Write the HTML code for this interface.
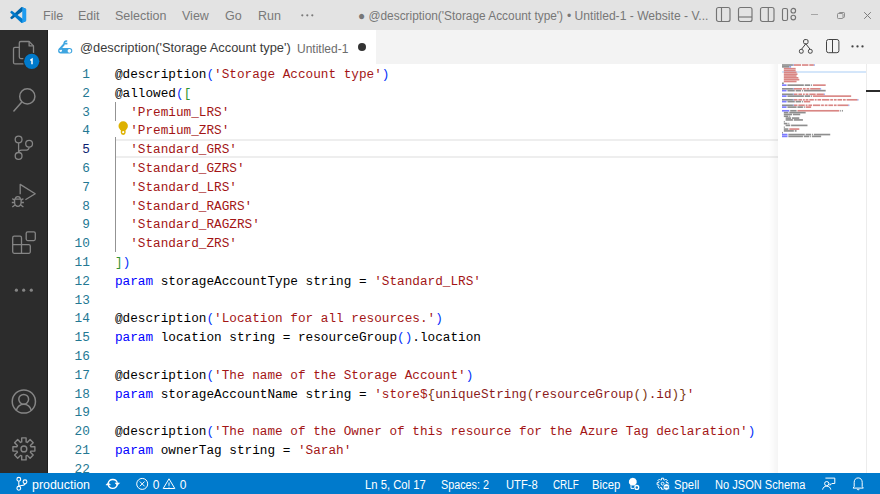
<!DOCTYPE html>
<html><head><meta charset="utf-8">
<style>
*{margin:0;padding:0;box-sizing:border-box}
html,body{width:880px;height:494px;overflow:hidden;background:#fff;font-family:"Liberation Sans",sans-serif}
.abs{position:absolute}
svg{position:absolute;overflow:visible}
#title{left:0;top:0;width:880px;height:30px;background:#e3e3e3}
.menu{position:absolute;top:1px;height:30px;line-height:30px;font-size:12.5px;color:#797979;white-space:nowrap}
#act{left:0;top:30px;width:48px;height:443px;background:#2c2c2c;border-right:1px solid #1f1f1f}
#tabs{left:48px;top:30px;width:832px;height:34px;background:#f3f3f3}
#tab{left:48px;top:30px;width:328px;height:34px;background:#fff}
.tabt{position:absolute;top:30px;height:34px;line-height:34px;white-space:nowrap}
#editor{left:48px;top:64px;width:832px;height:409px;background:#fff;overflow:hidden}
.ln{position:absolute;left:0;width:41.8px;text-align:right;font-family:"Liberation Mono",monospace;font-size:12.74px;color:#237893;height:18.8px;line-height:18.8px}
.ln.cur{color:#0b216f}
.code{position:absolute;left:67px;font-family:"Liberation Mono",monospace;font-size:12.71px;color:#000;height:18.8px;line-height:18.8px;white-space:pre}
.s{color:#a31515}.b{color:#0431fa}.g{color:#319331}.k{color:#0000ff}.s2{color:#7b3814}.s3{color:#8b1a1a}
#status{left:0;top:473px;width:880px;height:21px;background:#007acc}
.st{position:absolute;top:474.7px;height:21px;line-height:21px;font-size:12px;color:#fff;white-space:nowrap;transform-origin:0 0}
</style></head><body>
<div id="title" class="abs">
  <svg style="left:9.5px;top:7px" width="16.5" height="16" viewBox="0 0 100 100">
    <path fill="#0065A9" d="M96.46 10.8L75.86.87C73.47-.28 70.62.2 68.75 2.08L1.3 63.58c-1.81 1.65-1.81 4.5 0 6.15l5.51 5.01c1.49 1.35 3.72 1.45 5.32.24L93.36 13.37C96.09 11.3 100 13.24 100 16.66v-.24c0-2.4-1.37-4.58-3.54-5.62z"/>
    <path fill="#007ACC" d="M96.46 89.2l-20.6 9.93c-2.39 1.15-5.24.67-7.11-1.21L1.3 36.42c-1.81-1.65-1.81-4.5 0-6.15l5.51-5.01c1.49-1.35 3.72-1.45 5.32-.24l81.23 61.61c2.73 2.07 6.64.13 6.64-3.29v.24c0 2.4-1.37 4.58-3.54 5.62z"/>
    <path fill="#1F9CF0" d="M75.86 99.13c-2.39 1.15-5.24.67-7.11-1.21 2.31 2.31 6.25.68 6.25-2.58V4.66c0-3.26-3.94-4.89-6.25-2.58 1.87-1.88 4.72-2.36 7.11-1.21l20.6 9.92c2.17 1.04 3.54 3.23 3.54 5.63v67.16c0 2.4-1.37 4.59-3.54 5.63z"/>
  </svg>
  <div class="menu" style="left:43px">File</div>
  <div class="menu" style="left:78px">Edit</div>
  <div class="menu" style="left:115px">Selection</div>
  <div class="menu" style="left:182px">View</div>
  <div class="menu" style="left:225px">Go</div>
  <div class="menu" style="left:258px">Run</div>
  <svg style="left:301px;top:14px" width="13" height="3" viewBox="0 0 13 3"><circle cx="1.3" cy="1.3" r="1.1" fill="#7a7a7a"/><circle cx="6.3" cy="1.3" r="1.1" fill="#7a7a7a"/><circle cx="11.3" cy="1.3" r="1.1" fill="#7a7a7a"/></svg>
  <div class="menu" style="left:358px;color:#777;transform:scaleX(0.949);transform-origin:0 0">● @description('Storage Account type')</div>
  <div class="menu" style="left:566.5px;color:#777;transform:scaleX(0.968);transform-origin:0 0">• Untitled-1 - Website - V...</div>
  <!-- layout icons -->
  <svg style="left:716px;top:7px" width="15" height="15" viewBox="0 0 15 15" fill="none" stroke="#747474" stroke-width="1.15"><rect x="0.5" y="0.5" width="13.5" height="14" rx="2"/><line x1="5.5" y1="0.5" x2="5.5" y2="14.5"/></svg>
  <svg style="left:738px;top:7px" width="15" height="15" viewBox="0 0 15 15" fill="none" stroke="#747474" stroke-width="1.15"><rect x="0.5" y="0.5" width="13.5" height="14" rx="2"/><line x1="0.5" y1="10" x2="14" y2="10"/></svg>
  <svg style="left:759.5px;top:7px" width="15" height="15" viewBox="0 0 15 15" fill="none" stroke="#747474" stroke-width="1.15"><rect x="0.5" y="0.5" width="13.5" height="14" rx="2"/><line x1="8.3" y1="0.5" x2="8.3" y2="14.5"/></svg>
  <svg style="left:782px;top:8px" width="15" height="13" viewBox="0 0 15 13" fill="none" stroke="#747474" stroke-width="1.15"><rect x="0.5" y="0.5" width="5" height="12" rx="1.5"/><circle cx="11.3" cy="2.7" r="2.3"/><circle cx="11.3" cy="9.5" r="2.3"/></svg>
  <!-- window controls -->
  <svg style="left:811px;top:14px" width="7" height="2" viewBox="0 0 7 2"><line x1="0" y1="0.5" x2="7" y2="0.5" stroke="#a5a5a5" stroke-width="1"/></svg>
  <svg style="left:837px;top:11.5px" width="8" height="7" viewBox="0 0 8 7" fill="none" stroke="#8e8e8e" stroke-width="1"><rect x="0.5" y="1.5" width="5.5" height="5" rx="0.8"/><path d="M2 1.5V1.2C2 0.8 2.3 0.5 2.7 0.5H6.8C7.2 0.5 7.5 0.8 7.5 1.2V4.8C7.5 5.2 7.2 5.5 6.8 5.5H6"/></svg>
  <svg style="left:863.5px;top:11.5px" width="7" height="7" viewBox="0 0 7 7" fill="none" stroke="#7c7c7c" stroke-width="1"><path d="M0.2 0.2L6.8 6.8M6.8 0.2L0.2 6.8"/></svg>
</div>

<div id="act" class="abs"></div>
<!-- activity icons -->
<svg style="left:0;top:0" width="48" height="494" viewBox="0 0 48 494" fill="none" stroke="#858585" stroke-width="1.3" stroke-linejoin="round">
  <path d="M19.3 47.3H15A1.5 1.5 0 0 0 13.5 48.8V62.4A1.5 1.5 0 0 0 15 63.9H24.5"/>
  <path d="M24 58.6H20.8A1.5 1.5 0 0 1 19.3 57.1V43A1.5 1.5 0 0 1 20.8 41.5H29.1L33.5 45.9V55"/><path d="M29.1 41.5V45.9H33.5"/>
  <circle cx="31.7" cy="61.3" r="8.8" fill="#2c2c2c" stroke="none"/>
  <circle cx="31.7" cy="61.3" r="7.6" fill="#007acc" stroke="none"/>
  <path d="M30.3 60.3L32 59.2V64.3" stroke="#fff" stroke-width="1.5" stroke-linejoin="miter"/>
  <circle cx="27.3" cy="96.4" r="7.6" stroke-width="1.5"/><path d="M21.6 102.3L13.9 111" stroke-width="1.5" stroke-linecap="round"/>
  <circle cx="18.6" cy="139.5" r="3.4"/><circle cx="18.6" cy="155.9" r="3.4"/><circle cx="29.1" cy="143.8" r="3.4"/>
  <path d="M18.6 142.9V152.5"/><path d="M29.1 147.2C29.1 149.3 27.5 150.2 25 150.2H21.5C19.8 150.2 18.6 151 18.6 152.5"/>
  <path d="M20.2 194.2V184.4L35.2 193.8L25.4 199.8"/>
  <path d="M15.4 199A2.45 2.45 0 0 1 20.3 199"/>
  <path d="M14.6 199.1H21.1V202.6A3.25 3.7 0 0 1 14.6 202.6Z"/>
  <path d="M14.6 200.2L12.3 198.6M14.6 202.5H11.8M15 205L12.3 207M21.1 200.2L23.4 198.6M21.1 202.5H23.9M20.7 205L23.4 207"/>
  <path d="M12.7 244.6V237.7A1.5 1.5 0 0 1 14.2 236.2H20A1.5 1.5 0 0 1 21.5 237.7V244.6H28.8A1.5 1.5 0 0 1 30.3 246.1V251.8A1.5 1.5 0 0 1 28.8 253.3H14.2A1.5 1.5 0 0 1 12.7 251.8V244.6H21.5V253.3"/>
  <rect x="26.2" y="231.8" width="9.1" height="8.8" rx="1.5"/>
  <g fill="#858585" stroke="none"><circle cx="16.4" cy="290.2" r="1.6"/><circle cx="23.7" cy="290.2" r="1.6"/><circle cx="31.3" cy="290.2" r="1.6"/></g>
  <circle cx="23.85" cy="401.5" r="11.6" stroke-width="1.5"/><circle cx="23.7" cy="399.3" r="4.9" stroke-width="1.5"/>
  <path d="M16.2 410.5C17.5 406.3 20.3 404.3 23.8 404.3S30.1 406.3 31.4 410.5" stroke-width="1.5"/>
  <g stroke-width="1.4"><path d="M21.70 441.94 L21.70 437.92 L26.10 437.92 L26.10 441.94 L27.27 442.42 L30.11 439.58 L33.22 442.69 L30.38 445.53 L30.86 446.70 L34.88 446.70 L34.88 451.10 L30.86 451.10 L30.38 452.27 L33.22 455.11 L30.11 458.22 L27.27 455.38 L26.10 455.86 L26.10 459.88 L21.70 459.88 L21.70 455.86 L20.53 455.38 L17.69 458.22 L14.58 455.11 L17.42 452.27 L16.94 451.10 L12.92 451.10 L12.92 446.70 L16.94 446.70 L17.42 445.53 L14.58 442.69 L17.69 439.58 L20.53 442.42Z"/><circle cx="23.9" cy="448.9" r="2.9"/></g>
</svg>
<div id="tabs" class="abs"></div>
<div id="tab" class="abs"></div>
<svg style="left:58px;top:40px" width="15" height="14" viewBox="0 0 15 14">
  <path fill="#3ea5e0" fill-rule="evenodd" d="M2.8 8H11.6A2.7 2.7 0 0 1 11.6 13.4H2.8A2.7 2.7 0 0 1 2.8 8Z M2.7 9.4A1.3 1.3 0 1 0 2.71 9.4Z M11.4 9.1A1.8 1.8 0 1 0 11.41 9.1Z"/>
  <path fill="none" stroke="#3ea5e0" stroke-width="2" d="M1.5 9.5L6.2 4.2"/>
  <path fill="none" stroke="#3ea5e0" stroke-width="1.6" d="M9.2 1.2C7 0.6 5.8 2.2 6.2 4.5M6.4 3.6H9.4"/>
</svg>
<div class="tabt" style="left:80px;top:31px;font-size:13px;color:#3b3b3b;transform:scaleX(0.988);transform-origin:0 0">@description('Storage Account type')</div>
<div class="tabt" style="left:297px;top:31.5px;font-size:12px;color:#6c6c6c">Untitled-1</div>
<svg style="left:358px;top:42.5px" width="8" height="8" viewBox="0 0 8 8"><circle cx="4" cy="4" r="4" fill="#333"/></svg>
<!-- tab actions -->
<svg style="left:0;top:0" width="880" height="64" viewBox="0 0 880 64" fill="none" stroke="#424242" stroke-width="1">
  <rect x="803.6" y="39.6" width="4.4" height="4.2" rx="1.3"/><rect x="799.4" y="49.4" width="3.8" height="3.8" rx="1.5"/><rect x="808.4" y="49.4" width="3.8" height="3.8" rx="1.5"/>
  <path d="M805.8 43.8L801.4 49.4M805.8 43.8L810.2 49.4"/>
  <rect x="826.5" y="39.5" width="12.4" height="13.2" rx="2"/><path d="M832.5 39.5V52.7"/>
  <g fill="#424242" stroke="none"><circle cx="852.5" cy="46.4" r="1.15"/><circle cx="857.5" cy="46.4" r="1.15"/><circle cx="862.5" cy="46.4" r="1.15"/></g>
</svg>

<div id="editor" class="abs">
<div style="position:absolute;left:67px;top:75.20px;width:663px;height:18.80px;border-top:2px solid #eeeeee;border-bottom:2px solid #eeeeee"></div>
<div style="position:absolute;left:67px;top:37.60px;width:1px;height:150.40px;background:#939393"></div>
<div class="ln" style="top:2.00px">1</div>
<div class="code" style="top:2.00px">@description<span class="b">(</span><span class="s">&#x27;Storage Account type&#x27;</span><span class="b">)</span></div>
<div class="ln" style="top:20.80px">2</div>
<div class="code" style="top:20.80px">@allowed<span class="b">(</span><span class="g">[</span></div>
<div class="ln" style="top:39.60px">3</div>
<div class="code" style="top:39.60px">  <span class="s">&#x27;Premium_LRS&#x27;</span></div>
<div class="ln" style="top:58.40px">4</div>
<div class="code" style="top:58.40px">  <span class="s">&#x27;Premium_ZRS&#x27;</span></div>
<div class="ln cur" style="top:77.20px">5</div>
<div class="code" style="top:77.20px">  <span class="s">&#x27;Standard_GRS&#x27;</span></div>
<div class="ln" style="top:96.00px">6</div>
<div class="code" style="top:96.00px">  <span class="s">&#x27;Standard_GZRS&#x27;</span></div>
<div class="ln" style="top:114.80px">7</div>
<div class="code" style="top:114.80px">  <span class="s">&#x27;Standard_LRS&#x27;</span></div>
<div class="ln" style="top:133.60px">8</div>
<div class="code" style="top:133.60px">  <span class="s">&#x27;Standard_RAGRS&#x27;</span></div>
<div class="ln" style="top:152.40px">9</div>
<div class="code" style="top:152.40px">  <span class="s">&#x27;Standard_RAGZRS&#x27;</span></div>
<div class="ln" style="top:171.20px">10</div>
<div class="code" style="top:171.20px">  <span class="s">&#x27;Standard_ZRS&#x27;</span></div>
<div class="ln" style="top:190.00px">11</div>
<div class="code" style="top:190.00px"><span class="g">]</span><span class="b">)</span></div>
<div class="ln" style="top:208.80px">12</div>
<div class="code" style="top:208.80px"><span class="k">param</span> storageAccountType string = <span class="s">&#x27;Standard_LRS&#x27;</span></div>
<div class="ln" style="top:227.60px">13</div>
<div class="code" style="top:227.60px"></div>
<div class="ln" style="top:246.40px">14</div>
<div class="code" style="top:246.40px">@description<span class="b">(</span><span class="s">&#x27;Location for all resources.&#x27;</span><span class="b">)</span></div>
<div class="ln" style="top:265.20px">15</div>
<div class="code" style="top:265.20px"><span class="k">param</span> location string = resourceGroup<span class="b">()</span>.location</div>
<div class="ln" style="top:284.00px">16</div>
<div class="code" style="top:284.00px"></div>
<div class="ln" style="top:302.80px">17</div>
<div class="code" style="top:302.80px">@description<span class="b">(</span><span class="s">&#x27;The name of the Storage Account&#x27;</span><span class="b">)</span></div>
<div class="ln" style="top:321.60px">18</div>
<div class="code" style="top:321.60px"><span class="k">param</span> storageAccountName string = <span class="s">&#x27;store$</span><span class="s2">{</span><span class="s3">uniqueString</span><span class="s2">(</span><span class="s3">resourceGroup</span><span class="s2">()</span><span class="s3">.id</span><span class="s2">)}</span><span class="s">&#x27;</span></div>
<div class="ln" style="top:340.40px">19</div>
<div class="code" style="top:340.40px"></div>
<div class="ln" style="top:359.20px">20</div>
<div class="code" style="top:359.20px">@description<span class="b">(</span><span class="s">&#x27;The name of the Owner of this resource for the Azure Tag declaration&#x27;</span><span class="b">)</span></div>
<div class="ln" style="top:378.00px">21</div>
<div class="code" style="top:378.00px"><span class="k">param</span> ownerTag string = <span class="s">&#x27;Sarah&#x27;</span></div>
<div class="ln" style="top:396.80px">22</div>
<div class="code" style="top:396.80px"></div>
<div style="position:absolute;left:66px;top:56.90px;width:14px;height:16px;background:#fff"></div>
<svg style="left:70px;top:56.5px" width="10" height="14" viewBox="0 0 10 14"><circle cx="5.2" cy="5" r="4.7" fill="#ddb100"/><path d="M2.8 7.5H7.6V11.6A2.4 2.4 0 0 1 2.8 11.6Z" fill="#ddb100"/><circle cx="5.2" cy="11.2" r="1.1" fill="#fff"/></svg>
</div>
<div class="abs" style="left:769px;top:64px;width:9px;height:409px;background:linear-gradient(to right,rgba(0,0,0,0),rgba(0,0,0,0.045))"></div><div class="abs" style="left:782px;top:71.2px;width:84px;height:1.8px;background:#d4e6fa"></div><svg style="left:0;top:0" width="880" height="494" viewBox="0 0 880 494"><rect x="782.00" y="64.20" width="10.92" height="1.65" fill="#8e8e8e"/><rect x="792.92" y="64.20" width="0.91" height="1.65" fill="#8aa0f2"/><rect x="793.83" y="64.20" width="7.28" height="1.65" fill="#d98684"/><rect x="802.02" y="64.20" width="6.37" height="1.65" fill="#d98684"/><rect x="809.30" y="64.20" width="4.55" height="1.65" fill="#d98684"/><rect x="813.85" y="64.20" width="0.91" height="1.65" fill="#8aa0f2"/><rect x="782.00" y="66.03" width="7.28" height="1.65" fill="#8e8e8e"/><rect x="789.28" y="66.03" width="1.82" height="1.65" fill="#8aa0f2"/><rect x="783.82" y="67.86" width="11.83" height="1.65" fill="#d98684"/><rect x="783.82" y="69.69" width="11.83" height="1.65" fill="#d98684"/><rect x="783.82" y="71.52" width="12.74" height="1.65" fill="#d98684"/><rect x="783.82" y="73.35" width="13.65" height="1.65" fill="#d98684"/><rect x="783.82" y="75.18" width="12.74" height="1.65" fill="#d98684"/><rect x="783.82" y="77.01" width="14.56" height="1.65" fill="#d98684"/><rect x="783.82" y="78.84" width="15.47" height="1.65" fill="#d98684"/><rect x="783.82" y="80.67" width="12.74" height="1.65" fill="#d98684"/><rect x="782.00" y="82.50" width="1.82" height="1.65" fill="#8e8e8e"/><rect x="782.00" y="84.33" width="4.55" height="1.65" fill="#7c7cff"/><rect x="787.46" y="84.33" width="16.38" height="1.65" fill="#8e8e8e"/><rect x="804.75" y="84.33" width="5.46" height="1.65" fill="#8e8e8e"/><rect x="811.12" y="84.33" width="0.91" height="1.65" fill="#8e8e8e"/><rect x="812.94" y="84.33" width="12.74" height="1.65" fill="#d98684"/><rect x="782.00" y="87.99" width="10.92" height="1.65" fill="#8e8e8e"/><rect x="792.92" y="87.99" width="0.91" height="1.65" fill="#8aa0f2"/><rect x="793.83" y="87.99" width="8.19" height="1.65" fill="#d98684"/><rect x="802.93" y="87.99" width="2.73" height="1.65" fill="#d98684"/><rect x="806.57" y="87.99" width="2.73" height="1.65" fill="#d98684"/><rect x="810.21" y="87.99" width="10.01" height="1.65" fill="#d98684"/><rect x="820.22" y="87.99" width="0.91" height="1.65" fill="#8aa0f2"/><rect x="782.00" y="89.82" width="4.55" height="1.65" fill="#7c7cff"/><rect x="787.46" y="89.82" width="7.28" height="1.65" fill="#8e8e8e"/><rect x="795.65" y="89.82" width="5.46" height="1.65" fill="#8e8e8e"/><rect x="802.02" y="89.82" width="0.91" height="1.65" fill="#8e8e8e"/><rect x="803.84" y="89.82" width="21.84" height="1.65" fill="#8e8e8e"/><rect x="782.00" y="93.48" width="10.92" height="1.65" fill="#8e8e8e"/><rect x="792.92" y="93.48" width="0.91" height="1.65" fill="#8aa0f2"/><rect x="793.83" y="93.48" width="3.64" height="1.65" fill="#d98684"/><rect x="798.38" y="93.48" width="3.64" height="1.65" fill="#d98684"/><rect x="802.93" y="93.48" width="1.82" height="1.65" fill="#d98684"/><rect x="805.66" y="93.48" width="2.73" height="1.65" fill="#d98684"/><rect x="809.30" y="93.48" width="6.37" height="1.65" fill="#d98684"/><rect x="816.58" y="93.48" width="7.28" height="1.65" fill="#d98684"/><rect x="823.86" y="93.48" width="0.91" height="1.65" fill="#8aa0f2"/><rect x="782.00" y="95.31" width="4.55" height="1.65" fill="#7c7cff"/><rect x="787.46" y="95.31" width="16.38" height="1.65" fill="#8e8e8e"/><rect x="804.75" y="95.31" width="5.46" height="1.65" fill="#8e8e8e"/><rect x="811.12" y="95.31" width="0.91" height="1.65" fill="#8e8e8e"/><rect x="812.94" y="95.31" width="38.22" height="1.65" fill="#d98684"/><rect x="782.00" y="98.97" width="10.92" height="1.65" fill="#8e8e8e"/><rect x="792.92" y="98.97" width="0.91" height="1.65" fill="#8aa0f2"/><rect x="793.83" y="98.97" width="3.64" height="1.65" fill="#d98684"/><rect x="798.38" y="98.97" width="3.64" height="1.65" fill="#d98684"/><rect x="802.93" y="98.97" width="1.82" height="1.65" fill="#d98684"/><rect x="805.66" y="98.97" width="2.73" height="1.65" fill="#d98684"/><rect x="809.30" y="98.97" width="4.55" height="1.65" fill="#d98684"/><rect x="814.76" y="98.97" width="1.82" height="1.65" fill="#d98684"/><rect x="817.49" y="98.97" width="3.64" height="1.65" fill="#d98684"/><rect x="822.04" y="98.97" width="7.28" height="1.65" fill="#d98684"/><rect x="830.23" y="98.97" width="2.73" height="1.65" fill="#d98684"/><rect x="833.87" y="98.97" width="2.73" height="1.65" fill="#d98684"/><rect x="837.51" y="98.97" width="4.55" height="1.65" fill="#d98684"/><rect x="842.97" y="98.97" width="2.73" height="1.65" fill="#d98684"/><rect x="846.61" y="98.97" width="10.92" height="1.65" fill="#d98684"/><rect x="857.53" y="98.97" width="0.91" height="1.65" fill="#8aa0f2"/><rect x="782.00" y="100.80" width="4.55" height="1.65" fill="#7c7cff"/><rect x="787.46" y="100.80" width="7.28" height="1.65" fill="#8e8e8e"/><rect x="795.65" y="100.80" width="5.46" height="1.65" fill="#8e8e8e"/><rect x="802.02" y="100.80" width="0.91" height="1.65" fill="#8e8e8e"/><rect x="803.84" y="100.80" width="6.37" height="1.65" fill="#d98684"/><rect x="782.00" y="104.46" width="10.92" height="1.65" fill="#8e8e8e"/><rect x="792.92" y="104.46" width="0.91" height="1.65" fill="#8aa0f2"/><rect x="793.83" y="104.46" width="3.64" height="1.65" fill="#d98684"/><rect x="798.38" y="104.46" width="6.37" height="1.65" fill="#d98684"/><rect x="805.66" y="104.46" width="1.82" height="1.65" fill="#d98684"/><rect x="808.39" y="104.46" width="3.64" height="1.65" fill="#d98684"/><rect x="812.94" y="104.46" width="7.28" height="1.65" fill="#d98684"/><rect x="821.13" y="104.46" width="2.73" height="1.65" fill="#d98684"/><rect x="824.77" y="104.46" width="2.73" height="1.65" fill="#d98684"/><rect x="828.41" y="104.46" width="4.55" height="1.65" fill="#d98684"/><rect x="833.87" y="104.46" width="2.73" height="1.65" fill="#d98684"/><rect x="837.51" y="104.46" width="10.92" height="1.65" fill="#d98684"/><rect x="848.43" y="104.46" width="0.91" height="1.65" fill="#8aa0f2"/><rect x="782.00" y="106.29" width="4.55" height="1.65" fill="#7c7cff"/><rect x="787.46" y="106.29" width="9.10" height="1.65" fill="#8e8e8e"/><rect x="797.47" y="106.29" width="5.46" height="1.65" fill="#8e8e8e"/><rect x="803.84" y="106.29" width="0.91" height="1.65" fill="#8e8e8e"/><rect x="805.66" y="106.29" width="5.46" height="1.65" fill="#d98684"/><rect x="782.00" y="109.95" width="7.28" height="1.65" fill="#7c7cff"/><rect x="790.19" y="109.95" width="6.37" height="1.65" fill="#8e8e8e"/><rect x="797.47" y="109.95" width="41.86" height="1.65" fill="#d98684"/><rect x="840.24" y="109.95" width="0.91" height="1.65" fill="#8e8e8e"/><rect x="842.06" y="109.95" width="0.91" height="1.65" fill="#8e8e8e"/><rect x="783.82" y="111.78" width="4.55" height="1.65" fill="#8e8e8e"/><rect x="789.28" y="111.78" width="16.38" height="1.65" fill="#8e8e8e"/><rect x="783.82" y="113.61" width="8.19" height="1.65" fill="#8e8e8e"/><rect x="792.92" y="113.61" width="7.28" height="1.65" fill="#8e8e8e"/><rect x="783.82" y="115.44" width="4.55" height="1.65" fill="#8e8e8e"/><rect x="789.28" y="115.44" width="0.91" height="1.65" fill="#8e8e8e"/><rect x="785.64" y="117.27" width="5.46" height="1.65" fill="#8e8e8e"/><rect x="792.01" y="117.27" width="7.28" height="1.65" fill="#8e8e8e"/><rect x="785.64" y="119.10" width="7.28" height="1.65" fill="#8e8e8e"/><rect x="793.83" y="119.10" width="9.10" height="1.65" fill="#8e8e8e"/><rect x="783.82" y="120.93" width="0.91" height="1.65" fill="#8e8e8e"/><rect x="783.82" y="122.76" width="3.64" height="1.65" fill="#8e8e8e"/><rect x="788.37" y="122.76" width="0.91" height="1.65" fill="#8e8e8e"/><rect x="785.64" y="124.59" width="4.55" height="1.65" fill="#8e8e8e"/><rect x="791.10" y="124.59" width="16.38" height="1.65" fill="#8e8e8e"/><rect x="783.82" y="126.42" width="0.91" height="1.65" fill="#8e8e8e"/><rect x="783.82" y="128.25" width="4.55" height="1.65" fill="#8e8e8e"/><rect x="789.28" y="128.25" width="10.01" height="1.65" fill="#d98684"/><rect x="783.82" y="130.08" width="10.01" height="1.65" fill="#8e8e8e"/><rect x="794.74" y="130.08" width="1.82" height="1.65" fill="#8e8e8e"/><rect x="782.00" y="131.91" width="0.91" height="1.65" fill="#8e8e8e"/><rect x="782.00" y="133.74" width="5.46" height="1.65" fill="#7c7cff"/><rect x="788.37" y="133.74" width="16.38" height="1.65" fill="#8e8e8e"/><rect x="805.66" y="133.74" width="5.46" height="1.65" fill="#8e8e8e"/><rect x="812.03" y="133.74" width="0.91" height="1.65" fill="#8e8e8e"/><rect x="813.85" y="133.74" width="16.38" height="1.65" fill="#8e8e8e"/><rect x="782.00" y="135.57" width="5.46" height="1.65" fill="#7c7cff"/><rect x="788.37" y="135.57" width="14.56" height="1.65" fill="#8e8e8e"/><rect x="803.84" y="135.57" width="5.46" height="1.65" fill="#8e8e8e"/><rect x="810.21" y="135.57" width="0.91" height="1.65" fill="#8e8e8e"/><rect x="812.03" y="135.57" width="9.10" height="1.65" fill="#8e8e8e"/></svg><div class="abs" style="left:866px;top:64px;width:1px;height:409px;background:#ececec"></div><div class="abs" style="left:866px;top:89.5px;width:14px;height:2px;background:#2b2b2b"></div>

<div id="status" class="abs"></div>
<svg style="left:0;top:0" width="880" height="494" viewBox="0 0 880 494" fill="none" stroke="#fff" stroke-width="1.1">
  <circle cx="18.8" cy="479.3" r="1.9"/><circle cx="18.8" cy="488.3" r="1.9"/><circle cx="25" cy="481.8" r="1.9"/>
  <path d="M18.8 481.2V486.4M25 483.7C25 485.3 23.5 485.3 21.5 485.5C19.8 485.7 18.8 486 18.8 486.4"/>
  <path d="M108.3 483.2A4.6 4.4 0 0 1 117.3 482.8M117.2 484.6A4.6 4.4 0 0 1 108.2 485" stroke-width="1.3"/>
  <path d="M115 482.9H119.6L117.3 485.4Z M105.9 485H110.5L108.2 482.5Z" fill="#fff" stroke-width="0.5"/>
  <circle cx="142.2" cy="483.9" r="5.5" stroke-width="1"/><path d="M139.8 481.5L144.6 486.3M144.6 481.5L139.8 486.3" stroke-width="1"/>
  <path d="M169 478.8L174.8 488.5H163.2Z" stroke-width="1" stroke-linejoin="round"/><path d="M169 482.5V485.8M169 486.8V487.6" stroke-width="1"/>
  <path fill="#fff" stroke="none" d="M632.8 477.7A4 4 0 0 1 635.2 484.9V485.6H630.4V484.9A4 4 0 0 1 632.8 477.7Z"/>
  <path d="M631 485.5V488.4H634" stroke-width="1"/>
  <circle cx="636.8" cy="487.4" r="1.9" stroke-width="1.3"/>
  <path d="M661.50 479.85 L661.50 478.21 L663.70 478.21 L663.70 479.85 L664.54 480.20 L665.70 479.04 L667.26 480.60 L666.10 481.76 L666.45 482.60 L668.09 482.60 L668.09 484.80 L666.45 484.80 L666.10 485.64 L667.26 486.80 L665.70 488.36 L664.54 487.20 L663.70 487.55 L663.70 489.19 L661.50 489.19 L661.50 487.55 L660.66 487.20 L659.50 488.36 L657.94 486.80 L659.10 485.64 L658.75 484.80 L657.11 484.80 L657.11 482.60 L658.75 482.60 L659.10 481.76 L657.94 480.60 L659.50 479.04 L660.66 480.20Z" stroke-width="1"/><circle cx="662.6" cy="483.7" r="1.4" stroke-width="1"/>
  <circle cx="666.4" cy="487" r="3.3" fill="#fff" stroke="#007acc" stroke-width="0.8"/><path d="M664.6 487H668.2" stroke="#007acc" stroke-width="1.1"/>
  <path d="M825.4 478.1H834.8V483.5H831.8L830 485.3V483.5" stroke-width="1" stroke-linejoin="round"/>
  <circle cx="826.7" cy="483.6" r="2.1" stroke-width="1"/><path d="M822.6 489.6C823 487.3 824.6 486.2 826.7 486.2S830.4 487.3 830.8 489.6" stroke-width="1"/>
  <path d="M858.2 477.9C855.6 477.9 854.2 480 854.2 482.3V486.5L853.1 488.1H863.3L862.2 486.5V482.3C862.2 480 860.8 477.9 858.2 477.9Z" stroke-width="1" stroke-linejoin="round"/>
  <path d="M857 489A1.3 1.3 0 0 0 859.4 489" stroke-width="1"/>
</svg>
<div class="st" style="left:32px;transform:scaleX(1.035)">production</div>
<div class="st" style="left:152.7px">0</div>
<div class="st" style="left:179.8px">0</div>
<div class="st" style="left:364.5px;transform:scaleX(0.937)">Ln 5, Col 17</div>
<div class="st" style="left:441.1px;transform:scaleX(0.898)">Spaces: 2</div>
<div class="st" style="left:505.6px;transform:scaleX(0.933)">UTF-8</div>
<div class="st" style="left:552.5px;transform:scaleX(0.82)">CRLF</div>
<div class="st" style="left:592.3px;transform:scaleX(0.945)">Bicep</div>
<div class="st" style="left:673.6px;transform:scaleX(0.945)">Spell</div>
<div class="st" style="left:714.9px;transform:scaleX(0.923)">No JSON Schema</div>
</body></html>
